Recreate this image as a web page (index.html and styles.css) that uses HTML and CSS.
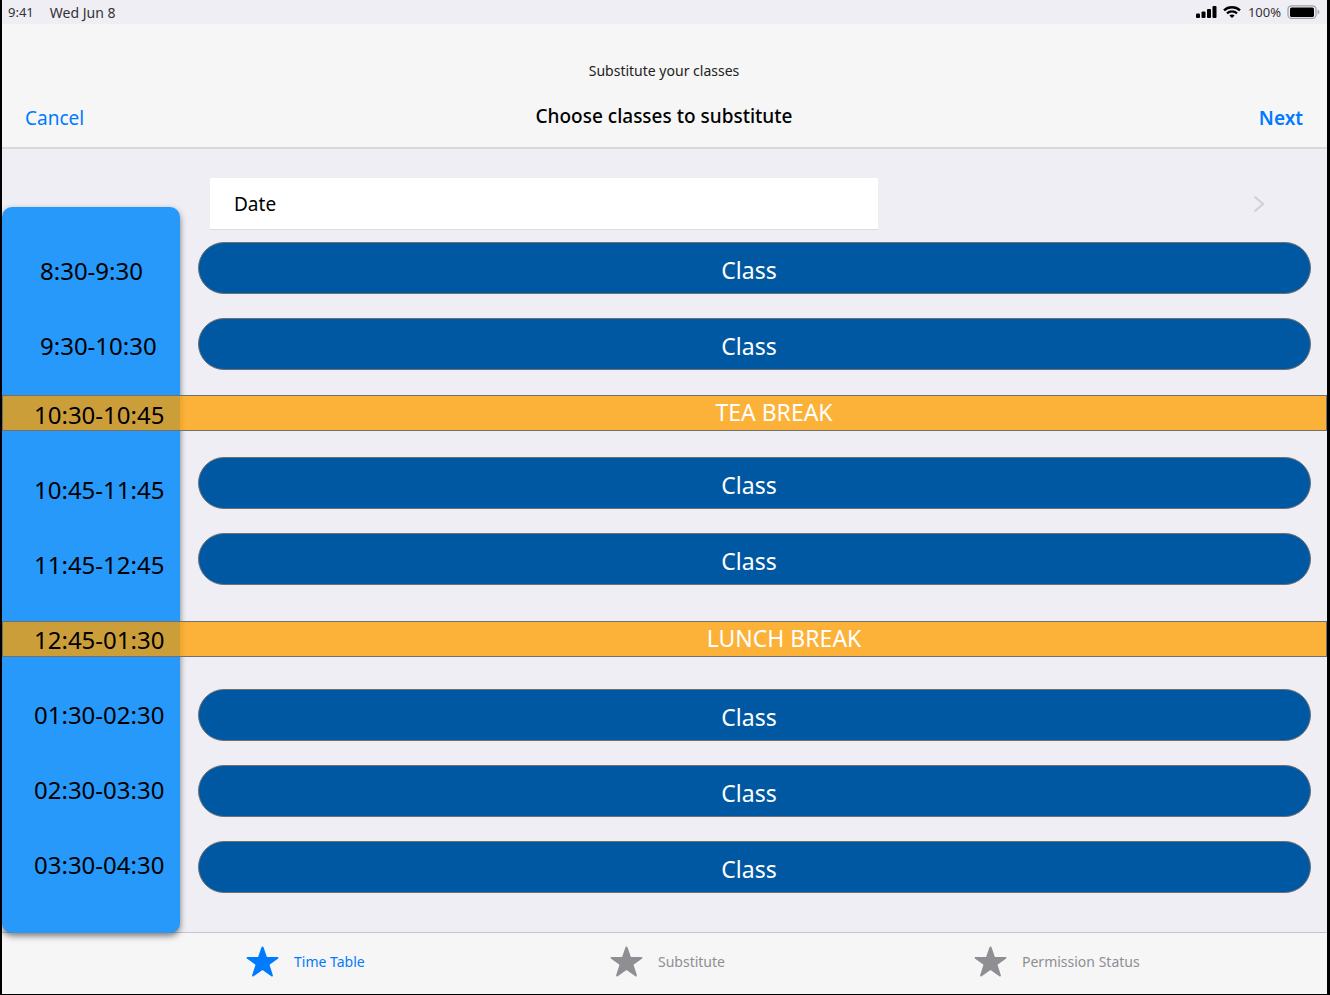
FILE: index.html
```
<!DOCTYPE html>
<html lang="en">
<head>
<meta charset="utf-8">
<meta name="viewport" content="width=device-width, initial-scale=1">
<title>Choose classes to substitute</title>
<link rel="stylesheet" href="styles.css">
</head>
<body>
<div class="screen">
  <div class="status">
    <span class="status-time">9:41</span>
    <span class="status-date">Wed Jun 8</span>
    <span class="status-right">
      <svg width="22" height="12" viewBox="0 0 22 12" aria-hidden="true"><rect x="0" y="7.500" width="4" height="4.500" rx="1"/><rect x="5.500" y="5.500" width="4" height="6.500" rx="1"/><rect x="11" y="3" width="4" height="9" rx="1"/><rect x="16.500" y="0" width="4" height="12" rx="1"/></svg>
      <svg class="wifi" width="18" height="12" viewBox="0 0 18 12" fill="none" stroke="#000" stroke-width="2.3" aria-hidden="true"><path d="M1 4.4C5.4 0.2 12.6 0.2 17 4.4"/><path d="M4 7.4C6.8 4.8 11.2 4.8 14 7.4"/><path d="M9 12L6.4 9.4C7.8 8.1 10.2 8.1 11.6 9.4Z" fill="#000" stroke="none"/></svg>
      <span>100%</span>
      <svg class="battery" width="33" height="14" viewBox="0 0 33 14" aria-hidden="true"><rect x="1" y="0.8" width="28" height="12.6" rx="3.5" fill="none" stroke="#a3a3a6" stroke-width="1.3"/><rect x="3" y="2.6" width="24" height="9.4" rx="1.6"/><path d="M30.6 4.8C33 5.4 33 8.8 30.6 9.4Z" fill="#a3a3a6"/></svg>
    </span>
  </div>

  <header class="header">
    <p class="subtitle">Substitute your classes</p>
    <div class="nav">
      <button class="nav-btn" type="button">Cancel</button>
      <h1 class="title">Choose classes to substitute</h1>
      <button class="nav-btn nav-next" type="button">Next</button>
    </div>
  </header>

  <main class="main">
    <div class="panel"></div>
    <div class="slots">
      <button class="date" type="button">
        <span class="date-field">Date</span>
        <svg width="12" height="18" viewBox="0 0 12 18" fill="none" stroke="#d0d0d5" stroke-width="2.2" aria-hidden="true"><path d="M1.5 1.5L10 9L1.5 16.5"/></svg>
      </button>
      <button class="class" type="button">Class</button>
      <button class="class" type="button">Class</button>
      <div class="break">TEA BREAK</div>
      <button class="class" type="button">Class</button>
      <button class="class" type="button">Class</button>
      <div class="break break-lunch">LUNCH BREAK</div>
      <button class="class" type="button">Class</button>
      <button class="class" type="button">Class</button>
      <button class="class" type="button">Class</button>
    </div>
    <ol class="times">
      <li class="time time-short">8:30-9:30</li>
      <li class="time time-short">9:30-10:30</li>
      <li class="time time-tea">10:30-10:45</li>
      <li class="time">10:45-11:45</li>
      <li class="time">11:45-12:45</li>
      <li class="time">12:45-01:30</li>
      <li class="time">01:30-02:30</li>
      <li class="time">02:30-03:30</li>
      <li class="time">03:30-04:30</li>
    </ol>
  </main>

  <nav class="tabs">
    <a class="tab tab-active" href="#timetable"><svg width="33" height="31" viewBox="0 0 33 31" aria-hidden="true"><path d="M16.500 0.500Q17.300 0.500 17.600 1.500L20.900 11H31.500Q33.300 11.400 31.800 12.700L23.500 18.700L26.800 29Q27.100 31 25.300 30.200L16.500 24L7.700 30.200Q5.900 31 6.200 29L9.500 18.700L1.200 12.700Q-0.300 11.400 1.500 11H12.100L15.400 1.500Q15.700 0.500 16.500 0.500Z"/></svg><span>Time Table</span></a>
    <a class="tab" href="#substitute"><svg width="33" height="31" viewBox="0 0 33 31" aria-hidden="true"><path d="M16.500 0.500Q17.300 0.500 17.600 1.500L20.900 11H31.500Q33.300 11.400 31.800 12.700L23.500 18.700L26.800 29Q27.100 31 25.300 30.200L16.500 24L7.700 30.200Q5.900 31 6.200 29L9.500 18.700L1.200 12.700Q-0.300 11.400 1.500 11H12.100L15.400 1.500Q15.700 0.500 16.500 0.500Z"/></svg><span>Substitute</span></a>
    <a class="tab" href="#permission"><svg width="33" height="31" viewBox="0 0 33 31" aria-hidden="true"><path d="M16.500 0.500Q17.300 0.500 17.600 1.500L20.900 11H31.500Q33.300 11.400 31.800 12.700L23.500 18.700L26.800 29Q27.100 31 25.300 30.200L16.500 24L7.700 30.200Q5.900 31 6.200 29L9.500 18.700L1.200 12.700Q-0.300 11.400 1.500 11H12.100L15.400 1.500Q15.700 0.500 16.500 0.500Z"/></svg><span>Permission Status</span></a>
  </nav>
</div>
</body>
</html>
```
FILE: styles.css
```
* {
  box-sizing: border-box;
}

body {
  margin: 0;
  background: #000;
  color: #000;
  font-family: "Noto Sans", "Open Sans", sans-serif;
}

button {
  margin: 0;
  padding: 0;
  border: 0;
  background: none;
  font-family: inherit;
  cursor: pointer;
}

.screen {
  display: flex;
  flex-direction: column;
  min-height: 100vh;
  border: solid #000;
  border-width: 0 3px 1px 2px;
  background: #efeef4;
}

/* Status bar */
.status {
  display: flex;
  align-items: center;
  gap: 16px;
  height: 24px;
  padding: 0 7px 0 6px;
  font-size: 13px;
  color: #333;
}

.status-date {
  font-size: 14px;
}

.status-right {
  display: flex;
  align-items: center;
  margin-left: auto;
}

.wifi {
  margin: 0 7px 0 5px;
}

.battery {
  margin-left: 6px;
}

/* Header */
.header {
  padding: 36px 24px 14px 23px;
  border-bottom: 2px solid #d9d9dd;
  background: #f6f6f6;
}

.subtitle {
  margin: 0;
  color: #222;
  font-size: 14px;
  line-height: 22px;
  text-align: center;
}

.nav {
  display: grid;
  grid-template-columns: 1fr auto 1fr;
  align-items: center;
  padding-top: 20px;
}

.title {
  margin: 0;
  padding-bottom: 3px;
  font-size: 19px;
  font-weight: 500;
  line-height: 28px;
  text-align: center;
}

.nav-btn {
  justify-self: start;
  color: #007aff;
  font-size: 19px;
  line-height: 28px;
}

.nav-next {
  justify-self: end;
  font-weight: 600;
}

/* Timetable: panel, slots and times share one grid area */
.main {
  display: grid;
  flex: 1;
  grid-template-columns: 178px 1fr;
}

.panel {
  z-index: 1;
  grid-area: 1 / 1;
  margin: 58px 0 -1px;
  border-radius: 10px;
  background: #2699fb;
  box-shadow: 0 3px 6px rgba(0, 0, 0, 0.5);
}

.slots {
  z-index: 2;
  display: flex;
  flex-direction: column;
  grid-area: 1 / 1 / 2 / 3;
  padding: 29px 0 15px;
}

.date {
  display: flex;
  align-items: center;
  justify-content: space-between;
  margin: 0 62px 12px 208px;
}

.date-field {
  width: 668px;
  max-width: 80%;
  padding: 1px 24px 0;
  border-bottom: 1px solid #dcdce0;
  background: #fff;
  font-size: 19px;
  line-height: 50px;
  text-align: left;
}

.class {
  height: 52px;
  margin: 0 16px 24px 196px;
  padding: 3px 11px 0 0;
  border: 1px solid #707070;
  border-radius: 26px;
  background: #0058a2;
  color: #fff;
  font-size: 23px;
  line-height: 46px;
}

.break {
  height: 36px;
  margin: 1px 0 26px;
  padding-left: 219px;
  border: 1px solid #707070;
  background: rgba(255, 160, 0, 0.77);
  color: #fff;
  font-size: 23px;
  line-height: 33px;
  text-align: center;
}

.break-lunch {
  margin: 12px 0 32px;
  padding-left: 239px;
}

.times {
  z-index: 3;
  display: flex;
  flex-direction: column;
  gap: 41px;
  grid-area: 1 / 1;
  margin: 0;
  padding: 105px 0 0 32px;
  list-style: none;
  pointer-events: none;
}

.time {
  font-size: 24px;
  line-height: 34px;
  white-space: nowrap;
}

.time-short {
  padding-left: 6px;
}

.time-tea {
  margin-top: -6px;
}

/* Tab bar */
.tabs {
  display: grid;
  grid-template-columns: 364px 364px auto;
  padding-left: 244px;
  border-top: 1px solid #c4c4ca;
  background: #f6f6f6;
}

.tab {
  display: flex;
  align-items: center;
  gap: 15px;
  height: 61px;
  padding-bottom: 4px;
  color: #8e8e93;
  font-size: 14px;
  text-decoration: none;
}

.tab svg {
  fill: currentColor;
}

.tab-active {
  color: #007aff;
}
```
